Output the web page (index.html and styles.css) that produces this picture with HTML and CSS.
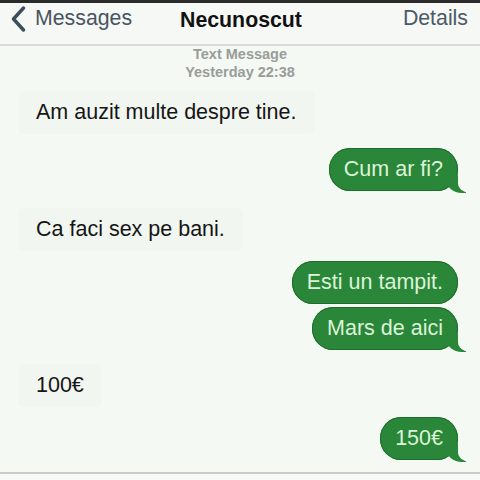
FILE: index.html
```html
<!DOCTYPE html>
<html>
<head>
<meta charset="utf-8">
<link rel="stylesheet" href="styles.css">
</head>
<body>
<div class="screen">
  <div class="topbar"></div>
  <header class="nav">
    <div class="back">
      <svg class="chev" width="16" height="26" viewBox="0 0 16 26"><path d="M13.5 2 L3.5 13 L13.5 24" fill="none" stroke="#3d4e5c" stroke-width="3.4" stroke-linecap="round" stroke-linejoin="round"/></svg>
      <span>Messages</span>
    </div>
    <div class="title">Necunoscut</div>
    <div class="details">Details</div>
  </header>
  <div class="meta">
    <div>Text Message</div>
    <div>Yesterday 22:38</div>
  </div>
  <main class="thread">
    <div class="row in first"><div class="bubble recv">Am auzit multe despre tine.</div></div>
    <div class="row out gap"><div class="bubble sent tail">Cum ar fi?</div></div>
    <div class="row in gap2"><div class="bubble recv">Ca faci sex pe bani.</div></div>
    <div class="row out gap3"><div class="bubble sent">Esti un tampit.</div></div>
    <div class="row out tight"><div class="bubble sent tail">Mars de aici</div></div>
    <div class="row in gap"><div class="bubble recv">100€</div></div>
    <div class="row out gap3"><div class="bubble sent tail">150€</div></div>
  </main>
  <div class="bottom"></div>
</div>
</body>
</html>
```
FILE: styles.css
```css
html, body {
  margin: 0;
  padding: 0;
  background: #f4faf3;
}
.screen {
  width: 480px;
  height: 480px;
  overflow: hidden;
  display: flex;
  flex-direction: column;
  font-family: "Liberation Sans", Arial, sans-serif;
  background: #f4faf3;
}
.topbar {
  height: 3px;
  background: #2b2b2b;
}
.nav {
  height: 43px;
  box-sizing: border-box;
  background: #f6f8f6;
  border-bottom: 2px solid #d8dcd8;
  display: flex;
  align-items: center;
  justify-content: space-between;
  padding: 0 12px 10px 10px;
  position: relative;
}
.back {
  display: flex;
  align-items: center;
  gap: 9px;
  color: #48545e;
  font-size: 21.3px;
}
.chev { display: block; }
.title {
  position: absolute;
  left: 0;
  right: 0;
  top: 5px;
  text-align: center;
  font-weight: bold;
  font-size: 21.3px;
  color: #111;
  pointer-events: none;
  padding-left: 2px;
}
.details {
  color: #4b5a66;
  font-size: 21.3px;
}
.meta {
  text-align: center;
  color: #9a9c9a;
  font-weight: bold;
  font-size: 14.5px;
  line-height: 18px;
  margin-top: -1px;
}
.thread {
  display: flex;
  flex-direction: column;
  padding: 0 22px 0 18px;
}
.row { display: flex; }
.row.in { justify-content: flex-start; }
.row.out { justify-content: flex-end; }
.row.first { margin-top: 10px; }
.row.gap { margin-top: 14px; }
.row.gap2 { margin-top: 17px; }
.row.gap3 { margin-top: 10px; }
.row.tight { margin-top: 3px; }
.bubble {
  height: 43px;
  box-sizing: border-box;
  display: flex;
  align-items: center;
  font-size: 21.5px;
  border-radius: 21px;
  position: relative;
}
.recv {
  background: #f2f6f1;
  color: #151515;
  padding: 0 18px;
  border-radius: 6px;
}
.sent {
  background: #2a8639;
  color: #dcf4d8;
  padding: 0 15px;
  box-shadow: inset 0 0 0 1px #1f6d2c;
}
.tail::before {
  content: "";
  position: absolute;
  bottom: -2px;
  right: -8px;
  width: 20px;
  height: 18px;
  background: #2a8639;
  border-bottom-left-radius: 16px 14px;
}
.tail::after {
  content: "";
  position: absolute;
  bottom: -2px;
  right: -18px;
  width: 18px;
  height: 20px;
  background: #f4faf3;
  border-bottom-left-radius: 12px 10px;
}
.bottom {
  margin-top: auto;
  height: 6px;
  border-top: 2px solid #c8ccc8;
  background: #f8faf8;
}
```
